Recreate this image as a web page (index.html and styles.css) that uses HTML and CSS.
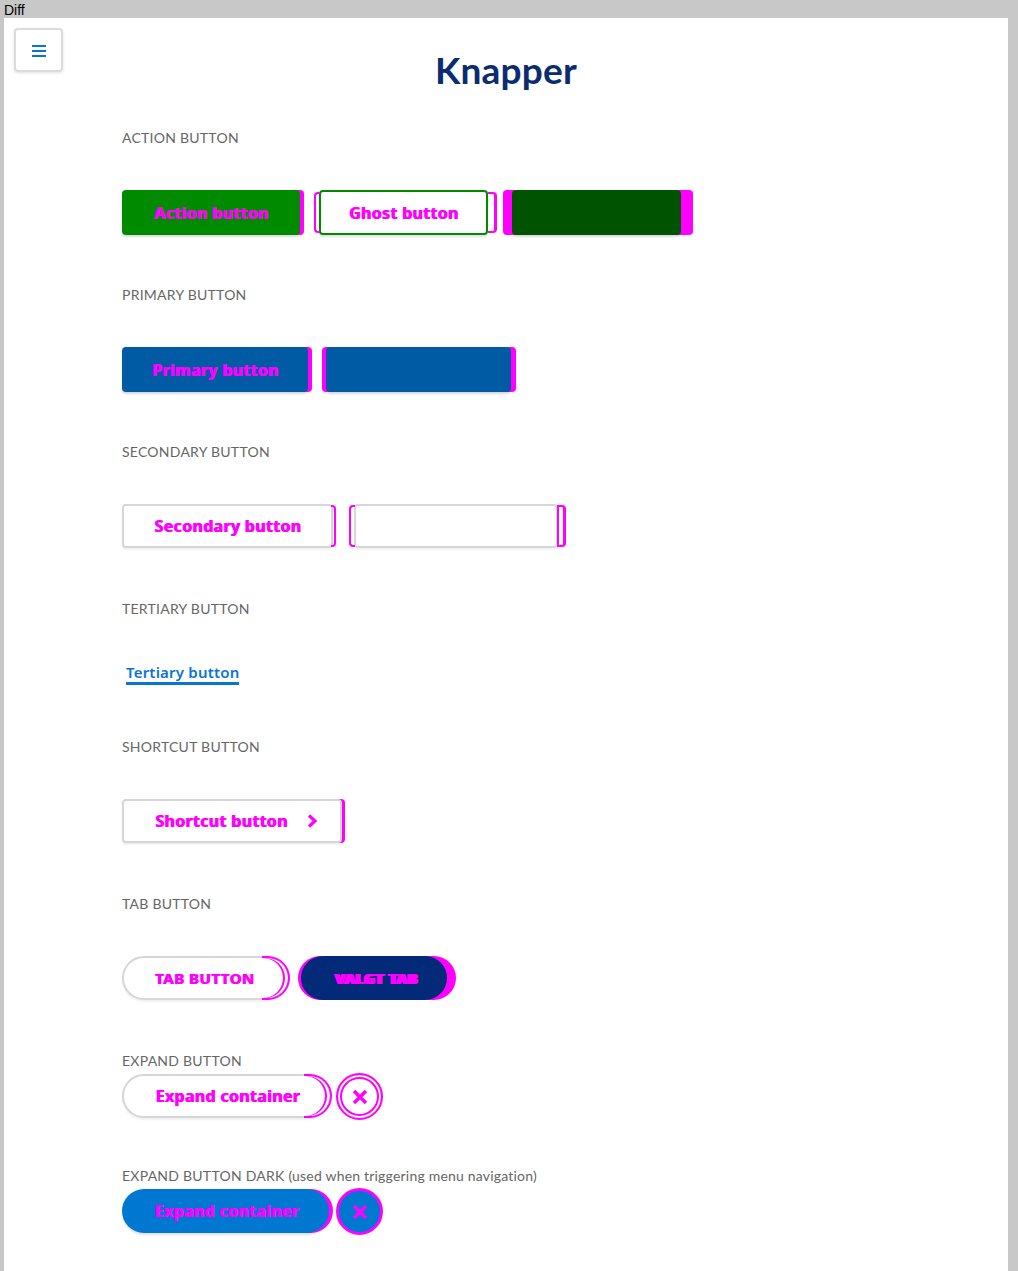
FILE: index.html
```html
<!DOCTYPE html>
<html lang="no">
<head>
<meta charset="utf-8">
<title>Knapper</title>
<link rel="stylesheet" href="styles.css">
</head>
<body>
<div class="topbar">Diff</div>
<div class="frame">
  <header class="head">
    <button class="menu" aria-label="Meny">
      <svg width="16" height="14" viewBox="0 0 16 14"><rect x="1" y="2" width="14" height="2" fill="#0a74d6"/><rect x="1" y="7" width="14" height="2" fill="#0a74d6"/><rect x="1" y="12" width="14" height="2" fill="#0a74d6"/></svg>
    </button>
    <h1 class="title">Knapper</h1>
    <span></span>
  </header>

  <section class="sec">
    <div class="label">ACTION BUTTON</div>
    <div class="row">
      <div class="btn action">Action button</div>
      <div class="btn ghost">Ghost button</div>
      <div class="btn darkgreen"></div>
    </div>
  </section>

  <section class="sec">
    <div class="label">PRIMARY BUTTON</div>
    <div class="row">
      <div class="btn primary">Primary button</div>
      <div class="btn primary2"></div>
    </div>
  </section>

  <section class="sec">
    <div class="label">SECONDARY BUTTON</div>
    <div class="row">
      <div class="btn secondary">Secondary button</div>
      <div class="btn secondary2"></div>
    </div>
  </section>

  <section class="sec">
    <div class="label">TERTIARY BUTTON</div>
    <div class="row tert-row">
      <a class="tertiary">Tertiary button</a>
    </div>
  </section>

  <section class="sec">
    <div class="label">SHORTCUT BUTTON</div>
    <div class="row">
      <div class="btn shortcut">Shortcut button
        <svg class="chev" width="12" height="16" viewBox="0 0 12 16"><path d="M3 2.5 L9 8 L3 13.5" fill="none" stroke="#ff00ff" stroke-width="3.2"/></svg>
      </div>
    </div>
  </section>

  <section class="sec">
    <div class="label">TAB BUTTON</div>
    <div class="row">
      <div class="btn tab">TAB BUTTON</div>
      <div class="btn tab-sel">VALGT TAB</div>
    </div>
  </section>

  <section class="sec sec-tight">
    <div class="label">EXPAND BUTTON</div>
    <div class="row row-tight">
      <div class="btn expand">Expand container</div>
      <div class="circle">
        <svg width="20" height="20" viewBox="0 0 20 20"><path d="M4 4 L16 16 M16 4 L4 16" stroke="#ff00ff" stroke-width="3.5"/></svg>
      </div>
    </div>
  </section>

  <section class="sec">
    <div class="label">EXPAND BUTTON DARK <span class="lower">(used when triggering menu navigation)</span></div>
    <div class="row row-tight">
      <div class="btn expand-dark">Expand container</div>
      <div class="circle circle-dark">
        <svg width="20" height="20" viewBox="0 0 20 20"><path d="M4 4 L16 16 M16 4 L4 16" stroke="#ff00ff" stroke-width="3.5"/></svg>
      </div>
    </div>
  </section>
</div>
</body>
</html>
```

FILE: styles.css
```css
html, body {
  margin: 0;
  padding: 0;
}
body {
  background: #c8c8c8;
  font-family: Lato, "Open Sans", sans-serif;
  width: 1018px;
  height: 1271px;
  overflow: hidden;
}
.topbar {
  height: 18px;
  line-height: 20px;
  padding-left: 4px;
  font-family: "Liberation Sans", Arial, sans-serif;
  font-size: 14px;
  color: #000;
}
.frame {
  margin-left: 4px;
  width: 1004px;
  height: 1253px;
  background: #fff;
  padding: 10px 0 0 0;
  box-sizing: border-box;
}
.head {
  display: grid;
  grid-template-columns: 1fr auto 1fr;
  align-items: start;
  padding-left: 10px;
  padding-right: 10px;
  margin-bottom: 40px;
}
.menu {
  width: 49px;
  height: 44px;
  border: 2px solid #dcdcdc;
  border-radius: 4px;
  background: #fff;
  box-shadow: 0 1px 3px rgba(0,0,0,0.12);
  display: flex;
  align-items: center;
  justify-content: center;
  padding: 0;
}
.title {
  margin: 24px 0 0 0;
  font-size: 37px;
  line-height: 36px;
  font-weight: 700;
  color: #0b2c6f;
  letter-spacing: 0.2px;
}
.sec {
  padding-left: 118px;
  margin-bottom: 50px;
}
.sec-tight {
  margin-bottom: 48px;
}
.label {
  height: 20px;
  line-height: 20px;
  font-size: 14px;
  color: #666;
  letter-spacing: 0.25px;
  margin-bottom: 42px;
}
.label .lower {
  letter-spacing: 0.2px;
}
.sec-tight .label,
.sec:last-child .label {
  margin-bottom: 3px;
}
.row {
  display: flex;
  align-items: flex-start;
  height: 45px;
}
.row-tight {
  height: 44px;
}
.btn {
  position: relative;
  box-sizing: border-box;
  height: 45px;
  display: flex;
  align-items: center;
  justify-content: center;
  font-family: "Noto Sans", Lato, sans-serif;
  font-size: 16px;
  font-weight: 700;
  color: #ff00ff;
  text-shadow: 1px 0 0 #ff00ff;
  border-radius: 4px;
  letter-spacing: 0.3px;
}
/* magenta diff brackets */
.btn::before, .btn::after {
  content: "";
  position: absolute;
  top: 0;
  bottom: 0;
  box-sizing: border-box;
  border: 2px solid #ff00ff;
  display: none;
}
.btn::before {
  border-right: 0;
  border-radius: 4px 0 0 4px;
}
.btn::after {
  border-left: 0;
  border-radius: 0 4px 4px 0;
}

.action {
  width: 178px;
  background: #008a00;
  box-shadow: 4px 0 0 #ff00ff, 0 2px 2px rgba(0,0,0,0.15);
}
.ghost {
  margin-left: 19px;
  width: 169px;
  border: 2px solid #008a00;
  background: #fff;
  box-shadow: 0 2px 2px rgba(0,0,0,0.12);
}
.ghost::before {
  display: block;
  left: -7px;
  width: 6px;
}
.ghost::after {
  display: block;
  right: -11px;
  width: 9px;
  border-width: 2px 3px 2px 0;
}
.darkgreen {
  margin-left: 24px;
  width: 169px;
  background: #005300;
  box-shadow: -9px 0 0 #ff00ff, 12px 0 0 #ff00ff, 0 2px 2px rgba(0,0,0,0.15);
}
.primary {
  width: 186px;
  background: #005ba4;
  box-shadow: 4px 0 0 #ff00ff, 0 2px 2px rgba(0,0,0,0.15);
}
.primary2 {
  margin-left: 18px;
  width: 185px;
  background: #005ba4;
  box-shadow: -4px 0 0 #ff00ff, 5px 0 0 #ff00ff, 0 2px 2px rgba(0,0,0,0.15);
}
.secondary, .secondary2, .shortcut {
  height: 44px;
  background: #fff;
  border: 2px solid #d6d6d6;
  box-shadow: 0 2px 2px rgba(0,0,0,0.06);
}
.secondary {
  width: 211px;
}
.secondary::after {
  display: block;
  right: -5px;
  width: 5px;
  top: -1px;
  bottom: -1px;
}
.secondary2 {
  margin-left: 21px;
  width: 204px;
}
.secondary2::before {
  display: block;
  left: -7px;
  width: 6px;
  top: -1px;
  bottom: -1px;
}
.secondary2::after {
  display: block;
  right: -10px;
  width: 9px;
  top: -1px;
  bottom: -1px;
  border-width: 2px 3px 2px 2px;
  border-left: 2px solid #ff00ff;
}
.tert-row {
  height: 26px;
  margin-top: 0;
}
.tertiary {
  margin-left: 4px;
  margin-top: 2px;
  font-family: "Noto Sans", Lato, sans-serif;
  font-size: 15px;
  font-weight: 600;
  color: #0a74d6;
  border-bottom: 3px solid #0a74d6;
  line-height: 19px;
  padding-bottom: 0;
  letter-spacing: 0.2px;
}
.shortcut {
  width: 220px;
  justify-content: flex-start;
  padding-left: 31px;
  box-shadow: 3px 0 0 #ff00ff, 0 2px 2px rgba(0,0,0,0.06);
}
.chev {
  margin-left: 19px;
}
.tab {
  width: 163px;
  height: 44px;
  background: #fff;
  border: 2px solid #d6d6d6;
  border-radius: 22px;
  font-size: 15px;
  letter-spacing: 0.5px;
  padding-left: 2px;
  box-shadow: 0 2px 2px rgba(0,0,0,0.06);
}
.tab::after {
  display: block;
  right: -7px;
  width: 28px;
  top: -2px;
  bottom: -2px;
  border-radius: 0 24px 24px 0;
  border-width: 2px 2px 2px 0;
  box-shadow: inset -3px 0 0 #fff, inset -5px 0 0 #ff00ff;
}
.tab-sel {
  margin-left: 16px;
  width: 146px;
  height: 44px;
  background: #032a78;
  border-radius: 22px;
  font-size: 15px;
  letter-spacing: 0.4px;
  padding-left: 2px;
  text-shadow: 1px 0 0 #ff00ff, 3px 0 0 #ff00ff;
  box-shadow: -3px 0 0 #ff00ff, 9px 0 0 #ff00ff;
}
.expand {
  width: 205px;
  height: 44px;
  background: #fff;
  border: 2px solid #d6d6d6;
  border-radius: 22px;
  padding-left: 6px;
  box-shadow: 0 2px 2px rgba(0,0,0,0.06);
}
.expand::after {
  display: block;
  right: -7px;
  width: 28px;
  top: -2px;
  bottom: -2px;
  border-radius: 0 24px 24px 0;
  border-width: 2px 2px 2px 0;
  box-shadow: inset -3px 0 0 #fff, inset -5px 0 0 #ff00ff;
}
.expand-dark {
  width: 207px;
  height: 44px;
  background: #0077d1;
  border-radius: 22px;
  padding-left: 2px;
  box-shadow: 4px 0 0 #ff00ff, 0 2px 2px rgba(0,0,0,0.12);
}
.circle {
  margin-left: 9px;
  width: 47px;
  height: 47px;
  margin-top: -1px;
  box-sizing: border-box;
  border-radius: 50%;
  border: 2px solid #ff00ff;
  background: #fff;
  box-shadow: inset 0 0 0 2px #fff, inset 0 0 0 4px #ff00ff;
  display: flex;
  align-items: center;
  justify-content: center;
}
.expand-dark + .circle {
  margin-left: 7px;
}
.circle-dark {
  background: #0077d1;
  border: 3px solid #ff00ff;
  box-shadow: none;
}
```
